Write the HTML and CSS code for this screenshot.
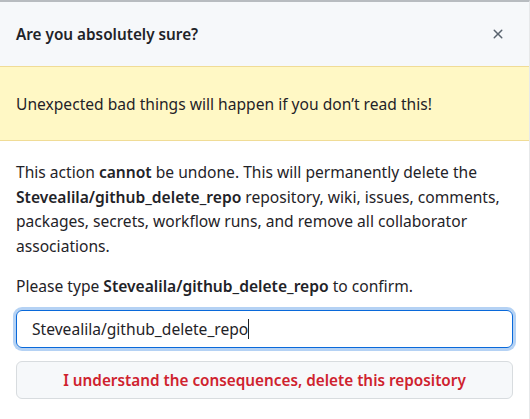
FILE: index.html
```html
<!DOCTYPE html>
<html>
<head>
<meta charset="utf-8">
<link rel="stylesheet" href="styles.css">
</head>
<body>
<div class="dialog">
  <div class="header">
    <h1 class="title">Are you absolutely sure?</h1>
    <button class="close" aria-label="Close">
      <svg width="16" height="16" viewBox="0 0 16 16"><path d="M3.72 3.72a.75.75 0 0 1 1.06 0L8 6.94l3.22-3.22a.75.75 0 1 1 1.06 1.06L9.06 8l3.22 3.22a.75.75 0 1 1-1.06 1.06L8 9.06l-3.22 3.22a.75.75 0 0 1-1.06-1.06L6.94 8 3.72 4.78a.75.75 0 0 1 0-1.06Z" fill="#59636e"/></svg>
    </button>
  </div>
  <div class="flash">Unexpected bad things will happen if you don’t read this!</div>
  <div class="body">
    <p class="text">This action <strong>cannot</strong> be undone. This will permanently delete the <strong>Stevealila/github_delete_repo</strong> repository, wiki, issues, comments, packages, secrets, workflow runs, and remove all collaborator associations.</p>
    <p class="text confirm">Please type <strong>Stevealila/github_delete_repo</strong> to confirm.</p>
    <div class="input">Stevealila/github_delete_repo<span class="caret"></span></div>
    <button class="danger">I understand the consequences, delete this repository</button>
  </div>
</div>
</body>
</html>
```

FILE: styles.css
```css
* { box-sizing: border-box; }
html, body { margin: 0; padding: 0; background: #fff; }
body {
  font-family: "Noto Sans", "Open Sans", sans-serif;
  color: #1f2328;
  width: 530px;
  height: 419px;
  overflow: hidden;
}
.dialog {
  border-top: 2px solid #b8bcc0;
  border-right: 1px solid #e6e8ea;
  height: 419px;
}
.header {
  background: #f6f8fa;
  height: 64px;
  display: flex;
  align-items: center;
  justify-content: space-between;
  padding: 0 16px;
}
.title {
  margin: 0;
  font-size: 15.3px;
  font-weight: 600;
  color: #1f2328;
}
.close {
  border: 0;
  background: none;
  padding: 0;
  width: 16px;
  height: 16px;
  display: flex;
  margin-right: 7px;
}
.flash {
  background: #fff8c5;
  border-top: 1px solid #f0dc96;
  border-bottom: 1px solid #f0dc96;
  height: 75px;
  display: flex;
  align-items: center;
  padding: 0 16px;
  font-size: 15.6px;
  color: #1f2328;
}
.body {
  padding: 19px 16px 16px;
}
.text {
  margin: 0;
  font-size: 15.6px;
  line-height: 24.6px;
  color: #1f2328;
}
.text strong { font-weight: 600; }
.confirm { margin-top: 16px; }
.input {
  margin-top: 11px;
  height: 38px;
  border: 1px solid #0969da;
  border-radius: 6px;
  box-shadow: 0 0 0 3px rgba(9, 105, 218, 0.3);
  padding: 0 15px;
  display: flex;
  align-items: center;
  font-size: 15.6px;
  color: #1f2328;
}
.caret {
  display: inline-block;
  width: 1px;
  height: 20px;
  background: #1f2328;
}
.danger {
  margin-top: 13px;
  width: 100%;
  height: 38px;
  border: 1px solid #d8dcdf;
  border-radius: 6px;
  background: #f6f8fa;
  color: #cf222e;
  font-family: inherit;
  font-size: 15.3px;
  font-weight: 600;
}
```
